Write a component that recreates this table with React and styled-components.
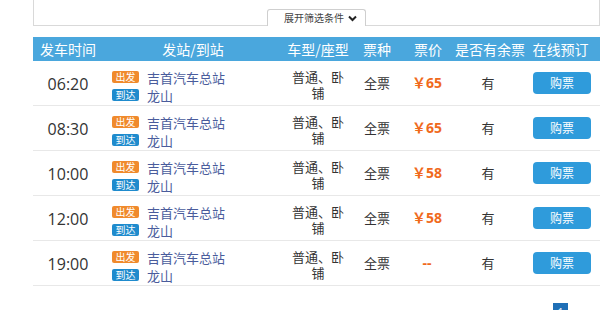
import styled, { createGlobalStyle } from "styled-components";

const GlobalStyle = createGlobalStyle`
  html, body {
    margin: 0;
    padding: 0;
    background: #ffffff;
  }
  body {
    font-family: "Noto Sans CJK SC", sans-serif;
    color: #333333;
  }
`;

const Page = styled.div`
  width: 567px;
  margin-left: 33px;
`;

const FilterPanel = styled.div`
  height: 25px;
  border-left: 1px solid #d9d9d9;
  border-right: 1px solid #d9d9d9;
  border-bottom: 1px solid #d9d9d9;
  display: flex;
  justify-content: center;
  align-items: flex-end;
`;

const FilterToggle = styled.button`
  width: 99px;
  height: 17px;
  margin: 0 0 -1px 0;
  padding: 0 0 0 8px;
  background: #ffffff;
  border: 1px solid #cfcfcf;
  border-bottom: none;
  border-radius: 3px 3px 0 0;
  display: flex;
  align-items: center;
  justify-content: center;
  gap: 4px;
  font-family: "Noto Sans CJK SC", sans-serif;
  font-size: 10px;
  line-height: 14px;
  color: #444444;
`;

const Table = styled.div`
  margin-top: 11px;
`;

const columns = "70px 180px 70px 48px 54px 66px 1fr";

const HeadRow = styled.div`
  display: grid;
  grid-template-columns: ${columns};
  height: 24px;
  background: #4aa7dd;
  color: #ffffff;
  font-size: 14px;
  line-height: 24px;
`;

const HeadCell = styled.div`
  text-align: ${(p) => (p.$left ? "left" : "center")};
  padding-left: ${(p) => (p.$left ? "7px" : "0")};
  white-space: nowrap;
`;

const Row = styled.div`
  display: grid;
  grid-template-columns: ${columns};
  height: 44px;
  border-bottom: 1px solid #e8e8e8;
  align-items: center;
  font-size: 13px;
`;

const Cell = styled.div`
  text-align: center;
  line-height: 18px;
`;

const Time = styled(Cell)`
  font-family: "Open Sans", "Noto Sans CJK SC", sans-serif;
  font-size: 16px;
  padding-top: 2px;
  color: #333333;
`;

const Stations = styled.div`
  display: flex;
  flex-direction: column;
  padding: 6px 0 0 9px;
`;

const StationLine = styled.div`
  display: flex;
  align-items: center;
  gap: 8px;
  height: 18px;
  color: #4a5c9c;
  font-size: 13px;
`;

const Badge = styled.span`
  display: inline-block;
  width: 27px;
  height: 12px;
  line-height: 12px;
  border-radius: 2px;
  background: ${(p) => (p.$kind === "from" ? "#f08a2c" : "#1f8bcd")};
  color: #ffffff;
  font-size: 10px;
  text-align: center;
`;

const BusType = styled(Cell)`
  padding: 3px 6px 0;
  line-height: 16px;
  color: #333333;
`;

const Price = styled(Cell)`
  font-family: "Open Sans", "Noto Sans CJK SC", sans-serif;
  font-weight: 700;
  font-size: 14px;
  color: #f06a1c;
  padding-right: 2px;
`;

const BuyCell = styled.div`
  display: flex;
  justify-content: flex-end;
  padding-right: 9px;
`;

const BuyButton = styled.button`
  width: 58px;
  height: 22px;
  margin: 0;
  padding: 0;
  border: none;
  border-radius: 4px;
  background: #2f9bdb;
  color: #ffffff;
  font-family: "Noto Sans CJK SC", sans-serif;
  font-size: 12px;
  line-height: 22px;
`;

const Pager = styled.div`
  display: flex;
  justify-content: flex-end;
  padding: 17px 32px 0 0;
`;

const PageItem = styled.span`
  width: 15px;
  height: 18px;
  background: #1f6fb6;
  color: #ffffff;
  font-size: 10px;
  line-height: 18px;
  text-align: center;
  font-family: "Open Sans", sans-serif;
`;

const trips = [
  { time: "06:20", price: "￥65" },
  { time: "08:30", price: "￥65" },
  { time: "10:00", price: "￥58" },
  { time: "12:00", price: "￥58" },
  { time: "19:00", price: "--" },
];

function Chevron() {
  return (
    <svg width="9" height="7" viewBox="0 0 9 7">
      <polyline
        points="1,1.5 4.5,5 8,1.5"
        fill="none"
        stroke="#222"
        strokeWidth="2"
      />
    </svg>
  );
}

export default function App() {
  return (
    <>
      <GlobalStyle />
      <Page>
        <FilterPanel>
          <FilterToggle type="button">
            展开筛选条件
            <Chevron />
          </FilterToggle>
        </FilterPanel>
        <Table>
          <HeadRow>
            <HeadCell $left>发车时间</HeadCell>
            <HeadCell>发站/到站</HeadCell>
            <HeadCell>车型/座型</HeadCell>
            <HeadCell>票种</HeadCell>
            <HeadCell>票价</HeadCell>
            <HeadCell>是否有余票</HeadCell>
            <HeadCell>在线预订</HeadCell>
          </HeadRow>
          {trips.map((t) => (
            <Row key={t.time}>
              <Time>{t.time}</Time>
              <Stations>
                <StationLine>
                  <Badge $kind="from">出发</Badge>
                  吉首汽车总站
                </StationLine>
                <StationLine>
                  <Badge $kind="to">到达</Badge>
                  龙山
                </StationLine>
              </Stations>
              <BusType>普通、卧铺</BusType>
              <Cell>全票</Cell>
              <Price>{t.price}</Price>
              <Cell>有</Cell>
              <BuyCell>
                <BuyButton type="button">购票</BuyButton>
              </BuyCell>
            </Row>
          ))}
        </Table>
        <Pager>
          <PageItem>1</PageItem>
        </Pager>
      </Page>
    </>
  );
}
